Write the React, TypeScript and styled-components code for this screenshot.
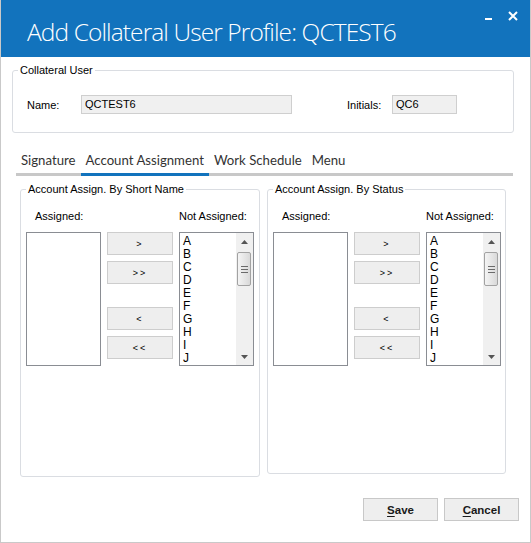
import React from 'react'
import styled, { createGlobalStyle } from 'styled-components'

const GlobalStyle = createGlobalStyle`
  html, body { margin: 0; padding: 0; background: #fff; }
  body { font-family: "Liberation Sans", Arial, sans-serif; color: #000; }
`

const letters = ['A', 'B', 'C', 'D', 'E', 'F', 'G', 'H', 'I', 'J']

const Window = styled.div`
  width: 531px;
  height: 543px;
  box-sizing: border-box;
  border: 1px solid #c9c9c9;
  border-top: none;
  display: flex;
  flex-direction: column;
  background: #fff;
`

const TitleBar = styled.div`
  height: 57px;
  flex-shrink: 0;
  background: #1273bd;
  display: flex;
  align-items: flex-start;
  padding-left: 26px;
`

const Title = styled.h1`
  margin: 0;
  flex: 1;
  padding-top: 17px;
  font-family: "Open Sans", sans-serif;
  font-weight: 300;
  font-size: 24.5px;
  letter-spacing: -0.9px;
  line-height: 30px;
  color: #fff;
  white-space: nowrap;
`

const WinControls = styled.div`
  display: flex;
  gap: 14px;
  padding: 11px 12px 0 0;
`

const Content = styled.div`
  display: flex;
  flex-direction: column;
  padding: 6px 16px 0 11px;
`

const GroupBox = styled.fieldset<{ $height?: number; $width?: number }>`
  margin: 0;
  padding: 0;
  min-width: 0;
  border: 1px solid #dadde2;
  border-radius: 3px;
  box-sizing: border-box;
  ${p => (p.$height ? `height: ${p.$height}px;` : '')}
  ${p => (p.$width ? `width: ${p.$width}px; flex: none;` : '')}
`

const Legend = styled.legend`
  margin-left: 5px;
  padding: 0 2px;
  font-size: 11px;
  line-height: 14px;
`

const UserRow = styled.div`
  display: flex;
  align-items: center;
  padding: 18px 14px 18px;
  font-size: 11px;
`

const FieldLabel = styled.label<{ $width: number; $offset?: number }>`
  width: ${p => p.$width}px;
  margin-left: ${p => p.$offset ?? 0}px;
`

const ReadOnlyBox = styled.div<{ $width: number }>`
  width: ${p => p.$width}px;
  height: 19px;
  box-sizing: border-box;
  padding: 0 3px;
  background: #f0f0f0;
  border: 1px solid #cfcfcf;
  line-height: 17px;
  font-size: 11px;
`

const TabStrip = styled.div`
  display: flex;
  margin: 14px 1px 0 4px;
  border-bottom: 3px solid #c8c8c8;
`

const Tab = styled.div<{ $active?: boolean }>`
  padding: 4px 5px 4px;
  margin-bottom: -3px;
  border-bottom: 3px solid ${p => (p.$active ? '#1273bd' : 'transparent')};
  font-family: Lato, "Open Sans", sans-serif;
  font-size: 13.2px;
  line-height: 18px;
  color: #333;
`

const Panels = styled.div`
  display: flex;
  gap: 7px;
  padding-left: 8px;
  margin-top: 6px;
  align-items: flex-start;
`

const PanelGrid = styled.div`
  display: grid;
  grid-template-columns: 75px 66px 75px;
  column-gap: 6px;
  row-gap: 9px;
  padding: 14px 5px 0;
  font-size: 11px;
  line-height: 13px;
`

const ColLabel = styled.div<{ $indent?: number }>`
  padding-left: ${p => p.$indent ?? 0}px;
`

const ListBox = styled.div`
  height: 134px;
  box-sizing: border-box;
  border: 1px solid #8a8d93;
  background: #fff;
  display: flex;
`

const Items = styled.div`
  flex: 1;
  padding: 2px 0 0 3px;
  font-size: 12px;
  line-height: 13px;
  overflow: hidden;
`

const ScrollBar = styled.div`
  width: 17px;
  display: flex;
  flex-direction: column;
  background: #f0f0f0;
`

const ArrowCell = styled.div`
  height: 17px;
  display: flex;
  align-items: center;
  justify-content: center;
`

const Track = styled.div`
  flex: 1;
`

const Thumb = styled.div`
  height: 34px;
  margin: 2px 2px 0 1px;
  box-sizing: border-box;
  border: 1px solid #a2a2a2;
  border-radius: 2px;
  background: linear-gradient(to right, #f4f4f4, #e4e4e4 60%, #d9d9d9);
  display: flex;
  flex-direction: column;
  align-items: center;
  justify-content: center;
  gap: 2px;
`

const Grip = styled.span`
  width: 7px;
  height: 1px;
  background: #6a6a6a;
`

const MoveColumn = styled.div`
  display: flex;
  flex-direction: column;
  gap: 23px;
`

const MoveGroup = styled.div`
  display: flex;
  flex-direction: column;
  gap: 6px;
`

const MoveButton = styled.button`
  width: 66px;
  height: 23px;
  padding: 0;
  background: #eeeeee;
  border: 1px solid #cdcdcd;
  font-family: "Liberation Sans", Arial, sans-serif;
  font-size: 9px;
  letter-spacing: 2px;
  color: #000;
`

const Footer = styled.div`
  display: flex;
  justify-content: flex-end;
  gap: 6px;
  margin-top: 21px;
  padding-right: 11px;
`

const ActionButton = styled.button`
  width: 75px;
  height: 23px;
  padding: 0;
  background: #eeeeee;
  border: 1px solid #c8c8c8;
  font-family: "Liberation Sans", Arial, sans-serif;
  font-weight: bold;
  font-size: 11.5px;
  color: #1a1a1a;
  u { text-decoration-thickness: 1px; text-underline-offset: 2px; }
`

const Triangle = ({ up }: { up?: boolean }) => (
  <svg width="7" height="4" viewBox="0 0 7 4">
    <path d={up ? 'M0 4 L3.5 0 L7 4 Z' : 'M0 0 L7 0 L3.5 4 Z'} fill="#555" />
  </svg>
)

const LetterList = () => (
  <ListBox>
    <Items>
      {letters.map(l => (
        <div key={l}>{l}</div>
      ))}
    </Items>
    <ScrollBar>
      <ArrowCell>
        <Triangle up />
      </ArrowCell>
      <Track>
        <Thumb>
          <Grip />
          <Grip />
          <Grip />
        </Thumb>
      </Track>
      <ArrowCell>
        <Triangle />
      </ArrowCell>
    </ScrollBar>
  </ListBox>
)

const AssignPanel = ({ title, height, width }: { title: string; height: number; width: number }) => (
  <GroupBox $height={height} $width={width}>
    <Legend>{title}</Legend>
    <PanelGrid>
      <ColLabel $indent={9}>Assigned:</ColLabel>
      <div />
      <ColLabel>Not Assigned:</ColLabel>
      <ListBox />
      <MoveColumn>
        <MoveGroup>
          <MoveButton>&gt;</MoveButton>
          <MoveButton>&gt;&gt;</MoveButton>
        </MoveGroup>
        <MoveGroup>
          <MoveButton>&lt;</MoveButton>
          <MoveButton>&lt;&lt;</MoveButton>
        </MoveGroup>
      </MoveColumn>
      <LetterList />
    </PanelGrid>
  </GroupBox>
)

const tabs = ['Signature', 'Account Assignment', 'Work Schedule', 'Menu']

export default function App() {
  return (
    <>
      <GlobalStyle />
      <Window>
        <TitleBar>
          <Title>Add Collateral User Profile: QCTEST6</Title>
          <WinControls>
            <svg width="10" height="10" viewBox="0 0 10 10">
              <rect x="1" y="7" width="7" height="2" fill="#fff" />
            </svg>
            <svg width="10" height="10" viewBox="0 0 10 10">
              <path d="M1 1 L9 9 M9 1 L1 9" stroke="#fff" strokeWidth="2" />
            </svg>
          </WinControls>
        </TitleBar>
        <Content>
          <GroupBox>
            <Legend>Collateral User</Legend>
            <UserRow>
              <FieldLabel $width={54}>Name:</FieldLabel>
              <ReadOnlyBox $width={211}>QCTEST6</ReadOnlyBox>
              <FieldLabel $width={45} $offset={55}>Initials:</FieldLabel>
              <ReadOnlyBox $width={65}>QC6</ReadOnlyBox>
            </UserRow>
          </GroupBox>
          <TabStrip>
            {tabs.map(t => (
              <Tab key={t} $active={t === 'Account Assignment'}>
                {t}
              </Tab>
            ))}
          </TabStrip>
          <Panels>
            <AssignPanel title="Account Assign. By Short Name" height={295} width={240} />
            <AssignPanel title="Account Assign. By Status" height={292} width={239} />
          </Panels>
        </Content>
        <Footer>
          <ActionButton>
            <u>S</u>ave
          </ActionButton>
          <ActionButton>
            <u>C</u>ancel
          </ActionButton>
        </Footer>
      </Window>
    </>
  )
}
